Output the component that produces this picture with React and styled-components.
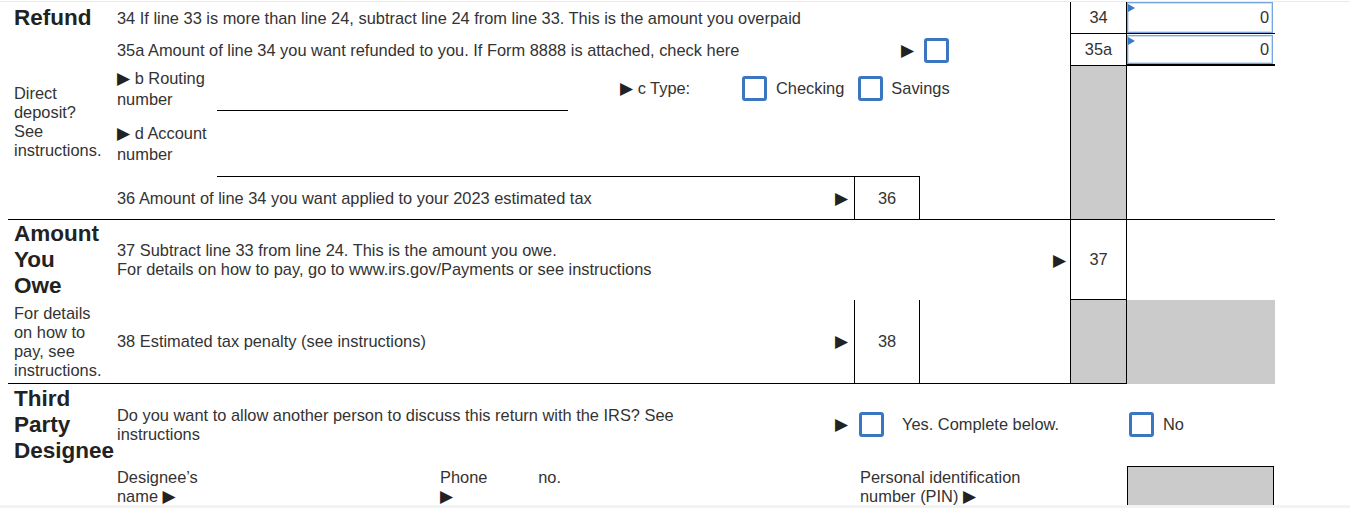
import React from "react";
import styled, { createGlobalStyle, css } from "styled-components";

const GlobalStyle = createGlobalStyle`
  html, body { margin: 0; padding: 0; background: #f3f3f3; }
  body {
    font-family: "Liberation Sans", Arial, "DejaVu Sans", sans-serif;
    font-size: 16.4px;
    color: #333;
  }
  *, *::before, *::after { box-sizing: border-box; }
`;

const place = css`
  grid-column: ${(p) => p.$col || "auto"};
  grid-row: ${(p) => p.$row || "auto"};
`;

const ruled = css`
  ${(p) => (p.$ruled ? "border-bottom: 1px solid #000;" : "")}
`;

const Page = styled.div`
  background: #fff;
  height: 505px;
  overflow: hidden;
  padding-top: 1px;
`;

const Sheet = styled.div`
  border-top: 1px solid #ebebeb;
  padding-left: 8px;
`;

const Section = styled.section`
  display: grid;
  grid-template-columns: 105px 741px 66px 150px 57px 148px;
  grid-template-rows: ${(p) => p.$rows};
  width: 1267px;
  ${(p) => (p.$closed ? "border-bottom: 1px solid #000;" : "")}
`;

const Title = styled.h2`
  ${place}
  ${ruled}
  margin: 0;
  padding-left: 6px;
  align-self: center;
  font-size: 22.5px;
  line-height: 26px;
  font-weight: 700;
  color: #222;
  white-space: nowrap;
`;

const SideNote = styled.div`
  ${place}
  ${ruled}
  display: flex;
  align-items: center;
  padding-left: 6px;
  line-height: 19px;
`;

const LineText = styled.div`
  ${place}
  ${ruled}
  display: flex;
  align-items: center;
  justify-content: space-between;
  padding-left: 4px;
  padding-right: ${(p) => p.$gap || "6px"};
  line-height: 19px;
  white-space: nowrap;
`;

const Tri = styled.span`
  font-family: "DejaVu Sans", sans-serif;
  font-size: 17px;
  line-height: 19px;
  color: #222;
`;

const CellArrow = styled(Tri)`
  ${place}
  align-self: center;
  justify-self: end;
  padding-right: 6px;
`;

const LineNo = styled.div`
  ${place}
  display: flex;
  align-items: center;
  justify-content: center;
  border-left: 1px solid #000;
  border-right: 1px solid #000;
  ${(p) => (p.$closed ? "border-bottom: 1px solid #000;" : "")}
  background: ${(p) => (p.$shaded ? "#cbcbcb" : "#fff")};
`;

const BoxNo = styled.div`
  ${place}
  ${ruled}
  display: flex;
  align-items: center;
  justify-content: center;
  border-left: 1px solid #000;
  border-right: 1px solid #000;
`;

const Filler = styled.div`
  ${place}
  ${ruled}
  background: ${(p) => (p.$shaded ? "#cbcbcb" : "transparent")};
`;

const AmountCell = styled.div`
  ${place}
  position: relative;
  display: flex;
  padding: ${(p) => (p.$heavy ? "1px 2px 0 0" : "0 2px 0 0")};
  border-bottom: ${(p) => (p.$heavy ? "2px" : "1px")} solid #000;

  &::before {
    content: "";
    position: absolute;
    left: 1px;
    top: ${(p) => (p.$heavy ? "3px" : "2px")};
    border-left: 7px solid #3b78c8;
    border-top: 4px solid transparent;
    border-bottom: 4px solid transparent;
  }
`;

const AmountField = styled.input`
  flex: 1;
  min-width: 0;
  margin: 0;
  padding: 0 3px 0 10px;
  text-align: right;
  font: inherit;
  color: #333;
  background: #fff;
  border: 1px solid #78a6dd;
  box-shadow: inset 0 0 0 1px #cfe0f4;
  outline: none;
`;

const Check = styled.input.attrs({ type: "checkbox" })`
  appearance: none;
  -webkit-appearance: none;
  flex: none;
  width: 25px;
  height: 25px;
  margin: 0 0 0 ${(p) => p.$before || "0"};
  border: 3px solid #3b76c0;
  border-radius: 3px;
  background: #fff;
`;

const CheckCell = styled.div`
  ${place}
  display: flex;
  align-items: center;
  padding-left: ${(p) => p.$inset || "0"};
`;

const BankRow = styled.div`
  ${place}
  display: flex;
  align-items: center;
`;

const BankLabel = styled.div`
  flex: none;
  width: 104px;
  padding-left: 4px;
  line-height: 21px;
`;

const BankLine = styled.div`
  align-self: flex-end;
  height: 1px;
  background: #000;
  ${(p) => (p.$width ? `width: ${p.$width}; flex: none;` : "flex: 1;")}
`;

const TypeLabel = styled.div`
  flex: none;
  width: 122px;
  margin-left: 52px;
`;

const Choice = styled.span`
  margin-left: ${(p) => p.$gap || "0"};
  white-space: nowrap;
`;

const DesigneeRow = styled.div`
  ${place}
  display: flex;
  align-items: flex-start;
  padding: 3px 0 0 4px;
  line-height: 19px;
`;

const FieldLabel = styled.div`
  ${place}
  flex: none;
  width: ${(p) => p.$width || "auto"};
  padding: ${(p) => (p.$cell ? "3px 0 0 6px" : "0")};
  line-height: 19px;
`;

const PhoneTop = styled.div`
  display: flex;
  justify-content: space-between;
`;

const PinBox = styled.div`
  ${place}
  margin-top: 1px;
  margin-right: 1px;
  background: #cbcbcb;
  border: 1px solid #000;
  border-bottom: none;
`;

export default function App() {
  return (
    <>
      <GlobalStyle />
      <Page>
        <Sheet>
          <Section $rows="32px 32px 45px 66px 42px" $closed>
            <Title $col="1" $row="1">Refund</Title>
            <LineText $col="2 / 5" $row="1">
              34 If line 33 is more than line 24, subtract line 24 from line 33. This is the amount you overpaid
            </LineText>
            <LineNo $col="5" $row="1" $closed>34</LineNo>
            <AmountCell $col="6" $row="1">
              <AmountField defaultValue="0" aria-label="Line 34 amount" />
            </AmountCell>

            <LineText $col="2 / 3" $row="2">
              35a Amount of line 34 you want refunded to you. If Form 8888 is attached, check here
            </LineText>
            <CellArrow $col="3" $row="2">▶</CellArrow>
            <CheckCell $col="4" $row="2" $inset="4px">
              <Check aria-label="Form 8888 attached" />
            </CheckCell>
            <LineNo $col="5" $row="2" $closed>35a</LineNo>
            <AmountCell $col="6" $row="2" $heavy>
              <AmountField defaultValue="0" aria-label="Line 35a amount" />
            </AmountCell>

            <SideNote $col="1" $row="3 / 5">
              Direct
              <br />
              deposit?
              <br />
              See
              <br />
              instructions.
            </SideNote>
            <BankRow $col="2 / 5" $row="3">
              <BankLabel>
                <Tri>▶</Tri> b Routing
                <br />
                number
              </BankLabel>
              <BankLine $width="351px" />
              <TypeLabel>
                <Tri>▶</Tri> c Type:
              </TypeLabel>
              <Check aria-label="Checking" />
              <Choice $gap="9px">Checking</Choice>
              <Check $before="14px" aria-label="Savings" />
              <Choice $gap="8px">Savings</Choice>
            </BankRow>
            <BankRow $col="2 / 4" $row="4">
              <BankLabel>
                <Tri>▶</Tri> d Account
                <br />
                number
              </BankLabel>
              <BankLine />
            </BankRow>
            <LineText $col="2" $row="5">
              <span>36 Amount of line 34 you want applied to your 2023 estimated tax</span>
              <Tri>▶</Tri>
            </LineText>
            <BoxNo $col="3" $row="5">36</BoxNo>
            <LineNo $col="5" $row="3 / 6" $shaded />
          </Section>

          <Section $rows="80px 84px">
            <Title $col="1" $row="1">
              Amount
              <br />
              You
              <br />
              Owe
            </Title>
            <LineText $col="2 / 5" $row="1" $gap="4px">
              <span>
                37 Subtract line 33 from line 24. This is the amount you owe.
                <br />
                For details on how to pay, go to www.irs.gov/Payments or see instructions
              </span>
              <Tri>▶</Tri>
            </LineText>
            <LineNo $col="5" $row="1" $closed>37</LineNo>

            <SideNote $col="1" $row="2" $ruled>
              For details
              <br />
              on how to
              <br />
              pay, see
              <br />
              instructions.
            </SideNote>
            <LineText $col="2" $row="2" $ruled>
              <span>38 Estimated tax penalty (see instructions)</span>
              <Tri>▶</Tri>
            </LineText>
            <BoxNo $col="3" $row="2" $ruled>38</BoxNo>
            <Filler $col="4" $row="2" $ruled />
            <LineNo $col="5" $row="2" $shaded $closed />
            <Filler $col="6" $row="2" $shaded />
          </Section>

          <Section $rows="81px 60px">
            <Title $col="1" $row="1">
              Third
              <br />
              Party
              <br />
              Designee
            </Title>
            <LineText $col="2" $row="1">
              <span>
                Do you want to allow another person to discuss this return with the IRS? See
                <br />
                instructions
              </span>
              <Tri>▶</Tri>
            </LineText>
            <CheckCell $col="3 / 6" $row="1" $inset="5px">
              <Check aria-label="Yes" />
              <Choice $gap="18px">Yes. Complete below.</Choice>
            </CheckCell>
            <CheckCell $col="6" $row="1" $inset="2px">
              <Check aria-label="No" />
              <Choice $gap="9px">No</Choice>
            </CheckCell>

            <DesigneeRow $col="2" $row="2">
              <FieldLabel $width="323px">
                Designee’s
                <br />
                name <Tri>▶</Tri>
              </FieldLabel>
              <FieldLabel $width="121px">
                <PhoneTop>
                  <span>Phone</span>
                  <span>no.</span>
                </PhoneTop>
                <Tri>▶</Tri>
              </FieldLabel>
            </DesigneeRow>
            <FieldLabel $col="3 / 6" $row="2" $cell>
              Personal identification
              <br />
              number (PIN) <Tri>▶</Tri>
            </FieldLabel>
            <PinBox $col="6" $row="2" />
          </Section>
        </Sheet>
      </Page>
    </>
  );
}
